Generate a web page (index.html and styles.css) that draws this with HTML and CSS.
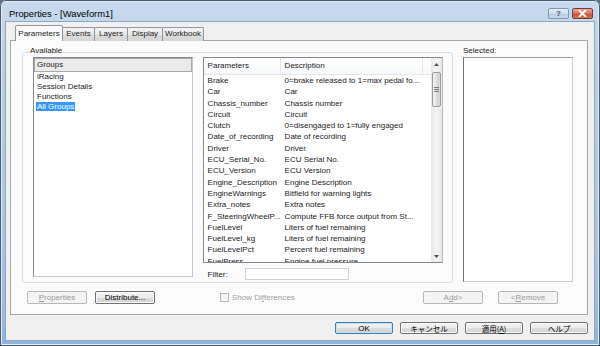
FILE: index.html
```html
<!DOCTYPE html>
<html>
<head>
<meta charset="utf-8">
<title>Properties - [Waveform1]</title>
<link rel="stylesheet" href="styles.css">
</head>
<body>
<div class="window">
  <div class="titlebar">
    <span class="title">Properties - [Waveform1]</span>
    <div class="capbtns">
      <span class="capbtn help">?</span>
      <span class="capbtn close">
        <svg width="9" height="7" viewBox="0 0 9 7"><path d="M1.5 0.5 L7.5 6.5 M7.5 0.5 L1.5 6.5" stroke="#fff" stroke-width="1.8" stroke-linecap="round"/></svg>
      </span>
    </div>
  </div>

  <div class="client">
    <div class="tabs">
      <span class="tab active w-params">Parameters</span>
      <span class="tab w-events">Events</span>
      <span class="tab w-layers">Layers</span>
      <span class="tab w-display">Display</span>
      <span class="tab w-workbook">Workbook</span>
    </div>

    <div class="panel">
      <div class="panel-main">
        <div class="group">
          <span class="group-title">Available</span>
          <div class="group-body">
            <!-- groups -->
            <div class="groups-list">
              <div class="groups-head">Groups</div>
              <div class="groups-item">iRacing</div>
              <div class="groups-item">Session Details</div>
              <div class="groups-item">Functions</div>
              <div class="groups-item"><span class="sel">All Groups</span></div>
            </div>
            <!-- parameters -->
            <div class="params-col">
              <div class="params-list">
                <div class="params-table">
                  <div class="params-head">
                    <span class="c1">Parameters</span>
                    <span class="c2">Description</span>
                    <span class="c3"></span>
                  </div>
                  <div class="params-row"><span class="c1">Brake</span><span class="c2">0=brake released to 1=max pedal fo...</span></div>
                  <div class="params-row"><span class="c1">Car</span><span class="c2">Car</span></div>
                  <div class="params-row"><span class="c1">Chassis_number</span><span class="c2">Chassis number</span></div>
                  <div class="params-row"><span class="c1">Circuit</span><span class="c2">Circuit</span></div>
                  <div class="params-row"><span class="c1">Clutch</span><span class="c2">0=disengaged to 1=fully engaged</span></div>
                  <div class="params-row"><span class="c1">Date_of_recording</span><span class="c2">Date of recording</span></div>
                  <div class="params-row"><span class="c1">Driver</span><span class="c2">Driver</span></div>
                  <div class="params-row"><span class="c1">ECU_Serial_No.</span><span class="c2">ECU Serial No.</span></div>
                  <div class="params-row"><span class="c1">ECU_Version</span><span class="c2">ECU Version</span></div>
                  <div class="params-row"><span class="c1">Engine_Description</span><span class="c2">Engine Description</span></div>
                  <div class="params-row"><span class="c1">EngineWarnings</span><span class="c2">Bitfield for warning lights</span></div>
                  <div class="params-row"><span class="c1">Extra_notes</span><span class="c2">Extra notes</span></div>
                  <div class="params-row"><span class="c1">F_SteeringWheelP...</span><span class="c2">Compute FFB force output from St...</span></div>
                  <div class="params-row"><span class="c1">FuelLevel</span><span class="c2">Liters of fuel remaining</span></div>
                  <div class="params-row"><span class="c1">FuelLevel_kg</span><span class="c2">Liters of fuel remaining</span></div>
                  <div class="params-row"><span class="c1">FuelLevelPct</span><span class="c2">Percent fuel remaining</span></div>
                  <div class="params-row"><span class="c1">FuelPress</span><span class="c2">Engine fuel pressure</span></div>
                </div>
                <div class="vscroll">
                  <div class="arrow">
                    <svg width="5" height="3" viewBox="0 0 5 3"><path d="M0 3 L2.5 0 L5 3 Z" fill="#4f4f4f"/></svg>
                  </div>
                  <div class="thumb"><span class="grip"></span></div>
                  <div class="track"></div>
                  <div class="arrow">
                    <svg width="5" height="3" viewBox="0 0 5 3"><path d="M0 0 L2.5 3 L5 0 Z" fill="#4f4f4f"/></svg>
                  </div>
                </div>
              </div>
              <div class="filter">
                <span class="filter-label">Filter:</span>
                <span class="input"></span>
              </div>
            </div>
          </div>
        </div>

        <div class="selected">
          <div class="selected-label">Selected:</div>
          <div class="selected-list"></div>
        </div>
      </div>

      <div class="panel-buttons">
        <span class="btn disabled"><span><u>P</u>roperties</span></span>
        <span class="btn">Distribute...</span>
        <span class="check disabled"><span class="box"></span>Show Di<u>f</u>ferences</span>
        <span class="btn disabled push">A<u>d</u>d&gt;</span>
        <span class="btn disabled">&lt;<u>R</u>emove</span>
      </div>
    </div>

    <div class="dialog-buttons">
      <span class="btn default">OK</span>
      <span class="btn jp">キャンセル</span>
      <span class="btn jp">適用(<u>A</u>)</span>
      <span class="btn jp">ヘルプ</span>
    </div>
  </div>
</div>
</body>
</html>
```

FILE: styles.css
```css
* {
    margin: 0;
    padding: 0;
    box-sizing: border-box;
}

body {
    width: 600px;
    height: 346px;
    overflow: hidden;
    background: #5f6f83;
    font-family: "Liberation Sans", Arial, "Noto Sans CJK JP", sans-serif;
    font-size: 8px;
    color: #1b1b1b;
}

/* window frame */
.window {
    width: 600px;
    height: 346px;
    display: flex;
    flex-direction: column;
    padding-bottom: 6px;
    border-radius: 6px 6px 0 0;
    background: linear-gradient(#c8daee, #b9cfe8 20%, #a9c5e5 70%, #8db4df);
    box-shadow: inset 0 0 0 1px #4b5b70, inset 0 0 0 2px #e3edf8;
}

.titlebar {
    height: 22px;
    display: flex;
    align-items: center;
    justify-content: space-between;
    padding: 4px 7px 0 9px;
}

.title {
    font-size: 9.4px;
    color: #000;
}

.capbtns {
    display: flex;
    gap: 3px;
}

.capbtn {
    width: 21px;
    height: 11px;
    display: flex;
    align-items: center;
    justify-content: center;
    border-radius: 2px;
}

.help {
    border: 1px solid #7f95b3;
    background: linear-gradient(#e6eef8, #cddcee 50%, #b6cbe4 51%, #c7d9ee);
    color: #3c4f6b;
    font-weight: bold;
    font-size: 8px;
}

.close {
    border: 1px solid #7b3a35;
    background: linear-gradient(#e9a99c, #d0715f 50%, #c4452f 51%, #d8774f);
}

.client {
    flex: 1;
    margin: 0 6px;
    background: #f0f0f0;
    padding: 3px 6px 0 4px;
    box-shadow: 0 0 0 1px #8ea7c4;
}

/* tabs */
.tabs {
    height: 16px;
    display: flex;
    align-items: flex-end;
    margin-left: 5px;
}

.tab {
    height: 14px;
    margin-left: -1px;
    border: 1px solid #9097a0;
    border-bottom: none;
    border-radius: 2px 2px 0 0;
    background: linear-gradient(#f4f4f4, #e8e8e8 50%, #dcdcdc 51%, #d6d6d6);
    line-height: 11px;
    text-align: center;
}

.tab.active {
    height: 16px;
    margin-left: 0;
    padding-top: 2px;
    background: #fbfbfb;
    position: relative;
    z-index: 1;
}

.w-params { width: 48px; }
.w-events { width: 33px; }
.w-layers { width: 34px; }
.w-display { width: 36px; }
.w-workbook { width: 42px; }

.panel {
    height: 275px;
    margin-top: -1px;
    border: 1px solid #a3a8ae;
    background: #fbfbfb;
    padding: 11px 0 0 11px;
}

.panel-main {
    display: flex;
    gap: 10px;
}

/* Available group box */
.group {
    width: 431px;
    height: 231px;
    border: 1px solid #d5dfe5;
    border-radius: 3px;
    display: flex;
    flex-direction: column;
}

.group-title {
    align-self: flex-start;
    margin: -7px 0 0 6px;
    padding: 0 1px;
    line-height: 10px;
    background: #fbfbfb;
}

.group-body {
    display: flex;
    gap: 10px;
    margin-top: 1px;
    padding: 0 9px 0 10px;
}

.groups-list {
    width: 160px;
    height: 220px;
    border: 1px solid #828790;
    border-right-color: #c4c7cc;
    border-bottom-color: #c4c7cc;
    background: #fff;
}

.groups-head {
    height: 14px;
    line-height: 12px;
    padding-left: 2px;
    border: 1px solid #a9a9a9;
    background: #ebebeb;
}

.groups-item {
    height: 10px;
    line-height: 10px;
    padding-left: 3px;
}

.groups-item .sel {
    display: inline-block;
    margin-left: -1px;
    padding: 0 1px;
    line-height: 9px;
    background: #3399ff;
    color: #fff;
}

/* parameter list */
.params-col {
    width: 241px;
    display: flex;
    flex-direction: column;
}

.params-list {
    height: 206px;
    border: 1px solid #828790;
    border-right-color: #b9bcc1;
    background: #fff;
    display: flex;
    overflow: hidden;
}

.params-table {
    flex: 1;
    overflow: hidden;
}

.params-head {
    display: flex;
    height: 17px;
    line-height: 16px;
    border-bottom: 1px solid #e3e5e8;
    background: linear-gradient(#ffffff, #f7f8f9);
}

.params-head .c1,
.params-head .c2 {
    border-right: 1px solid #e3e5e8;
}

.params-row {
    display: flex;
    height: 11.3px;
    line-height: 11.3px;
}

.c1 {
    width: 77px;
    padding-left: 4px;
    white-space: nowrap;
    overflow: hidden;
}

.c2 {
    width: 142px;
    padding-left: 4px;
    white-space: nowrap;
    overflow: hidden;
}

.c3 {
    flex: 1;
}

.vscroll {
    width: 11px;
    display: flex;
    flex-direction: column;
    background: linear-gradient(90deg, #e8e8e8, #f4f4f4 50%, #e8e8e8);
}

.arrow {
    height: 12px;
    display: flex;
    align-items: center;
    justify-content: center;
}

.thumb {
    height: 35px;
    margin: 2px 1px 0;
    border: 1px solid #9c9c9c;
    border-radius: 2px;
    background: linear-gradient(90deg, #f2f2f2, #e3e3e3 50%, #d3d3d3 51%, #d9d9d9);
    display: flex;
    align-items: center;
    justify-content: center;
}

.grip {
    width: 5px;
    height: 5px;
    border-top: 1px solid #7a7a7a;
    border-bottom: 1px solid #7a7a7a;
    background: linear-gradient(transparent 1px, #7a7a7a 1px, #7a7a7a 2px, transparent 2px);
}

.track {
    flex: 1;
}

.filter {
    display: flex;
    align-items: center;
    margin-top: 5px;
    height: 12px;
    padding-left: 5px;
}

.filter-label {
    width: 37px;
}

.input {
    width: 104px;
    height: 12px;
    border: 1px solid #cfd1d4;
    background: #fff;
}

/* Selected list */
.selected {
    width: 110px;
    display: flex;
    flex-direction: column;
}

.selected-label {
    margin-top: -6px;
    line-height: 10px;
}

.selected-list {
    height: 225px;
    margin-top: 1px;
    border: 1px solid #c9ccd0;
    border-left: 1px solid #6d7178;
    border-top-color: #9a9da2;
    background: #fff;
}

/* buttons */
.panel-buttons {
    display: flex;
    align-items: center;
    height: 13px;
    margin-top: 8px;
    padding: 0 29px 0 5px;
    gap: 8px;
}

.btn {
    width: 60px;
    height: 13px;
    display: flex;
    align-items: center;
    justify-content: center;
    border: 1px solid #707070;
    border-radius: 2px;
    background: linear-gradient(#f4f4f4, #ebebeb 50%, #dddddd 51%, #d2d2d2);
    box-shadow: inset 0 0 0 1px #fbfbfb;
    color: #000;
}

.btn.disabled {
    border-color: #b4b8bb;
    background: #f4f4f4;
    box-shadow: none;
    color: #9b9b9b;
}

.btn.push {
    margin-left: auto;
    margin-right: 7px;
}

.check {
    display: flex;
    align-items: center;
    margin-left: 57px;
    color: #a0a0a0;
}

.check .box {
    width: 9px;
    height: 9px;
    margin-right: 3px;
    border: 1px solid #b8b8b8;
    background: #f4f4f4;
}

.dialog-buttons {
    display: flex;
    justify-content: flex-end;
    gap: 7px;
    margin-top: 7px;
}

.dialog-buttons .btn {
    width: 58px;
    height: 12px;
}

.btn.default {
    border-color: #3c7fb1;
    box-shadow: inset 0 0 0 1px #b9e3f8;
}

.btn.jp {
    font-family: "Noto Sans CJK JP", sans-serif;
    font-size: 7.5px;
}
```
